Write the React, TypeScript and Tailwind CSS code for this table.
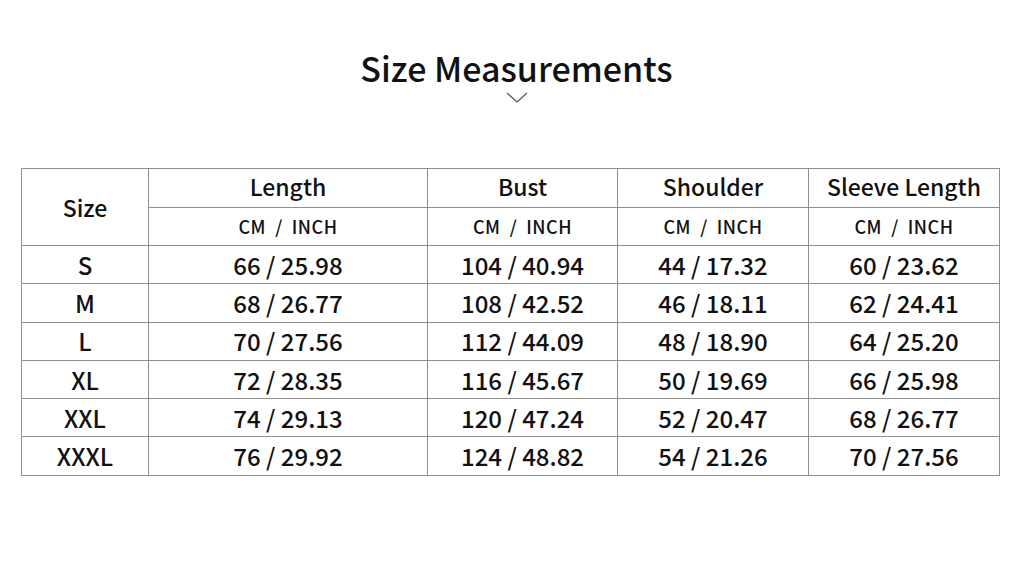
import React from 'react';

const rows = [
  ['S', '66 / 25.98', '104 / 40.94', '44 / 17.32', '60 / 23.62'],
  ['M', '68 / 26.77', '108 / 42.52', '46 / 18.11', '62 / 24.41'],
  ['L', '70 / 27.56', '112 / 44.09', '48 / 18.90', '64 / 25.20'],
  ['XL', '72 / 28.35', '116 / 45.67', '50 / 19.69', '66 / 25.98'],
  ['XXL', '74 / 29.13', '120 / 47.24', '52 / 20.47', '68 / 26.77'],
  ['XXXL', '76 / 29.92', '124 / 48.82', '54 / 21.26', '70 / 27.56'],
];

const heads = ['Length', 'Bust', 'Shoulder', 'Sleeve Length'];

const App = () => {
  return (
    <div className="w-[1024px] h-[576px] bg-white text-[#111] font-['Noto_Sans_CJK_SC','Noto_Sans',sans-serif] flex flex-col">
      <div className="flex flex-col items-center pl-[9px]">
        <h1 className="mt-[45px] text-[34px] leading-[46px] font-medium">Size Measurements</h1>
        <svg className="mt-[1px]" width="22" height="12" viewBox="0 0 22 12" fill="none">
          <path d="M1 1l10 9 10-9" stroke="#555" strokeWidth="1.2" />
        </svg>
      </div>
      <table className="mt-[64px] ml-[21px] w-[979px] border-collapse table-fixed text-center">
        <colgroup>
          <col className="w-[127px]" />
          <col className="w-[279px]" />
          <col className="w-[190px]" />
          <col className="w-[191px]" />
          <col className="w-[191px]" />
        </colgroup>
        <thead>
          <tr className="h-[39px]">
            <th rowSpan={2} className="border border-[#8f8f8f] font-medium text-[23px]">Size</th>
            {heads.map((h) => (
              <th key={h} className="border border-[#8f8f8f] font-medium text-[23px] leading-none pb-[3px]">{h}</th>
            ))}
          </tr>
          <tr className="h-[38px]">
            {heads.map((h) => (
              <th key={h} className="border border-[#8f8f8f] font-medium text-[18px] leading-none tracking-[0.5px] pb-[2px]">CM&nbsp; / &nbsp;INCH</th>
            ))}
          </tr>
        </thead>
        <tbody>
          {rows.map((r) => (
            <tr key={r[0]} className="h-[38.3px]">
              {r.map((c, i) => (
                <td key={i} className="border border-[#8f8f8f] font-medium text-[24px] leading-none">{c}</td>
              ))}
            </tr>
          ))}
        </tbody>
      </table>
    </div>
  );
};

export default App;
